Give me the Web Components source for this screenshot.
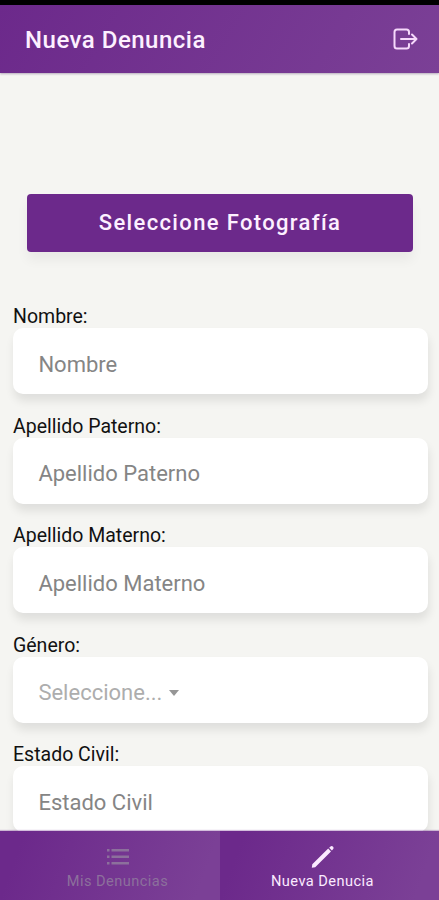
<!DOCTYPE html>
<html lang="es">
<head>
  <meta charset="UTF-8" />
  <meta name="viewport" content="width=device-width, initial-scale=1.0" />
  <title>Nueva Denuncia</title>
  <style>
    body {
      margin: 0;
      background: #f5f5f2;
      font-family: Roboto, "Liberation Sans", sans-serif;
    }
  </style>
</head>
<body>
  <denuncia-app>
    <app-header slot="header">Nueva Denuncia</app-header>
    <photo-button>Seleccione Fotografía</photo-button>
    <form-field label="Nombre:">Nombre</form-field>
    <form-field label="Apellido Paterno:">Apellido Paterno</form-field>
    <form-field label="Apellido Materno:">Apellido Materno</form-field>
    <form-field label="Género:" select>Seleccione...</form-field>
    <form-field label="Estado Civil:">Estado Civil</form-field>
    <tab-bar slot="tabs">
      <tab-item icon="list">Mis Denuncias</tab-item>
      <tab-item icon="pencil" active>Nueva Denucia</tab-item>
    </tab-bar>
  </denuncia-app>

  <script>
    class DenunciaApp extends HTMLElement {
      constructor() {
        super();
        this.attachShadow({ mode: 'open' }).innerHTML = `
          <style>
            :host {
              display: flex;
              flex-direction: column;
              height: 900px;
              overflow: hidden;
            }
            .status { flex: none; height: 5px; background: #000; }
            main { flex: 1; min-height: 0; overflow: hidden; padding: 121px 11px 0 13px; }
          </style>
          <div class="status"></div>
          <slot name="header"></slot>
          <main><slot></slot></main>
          <slot name="tabs"></slot>
        `;
      }
    }
    customElements.define('denuncia-app', DenunciaApp);

    class AppHeader extends HTMLElement {
      constructor() {
        super();
        this.attachShadow({ mode: 'open' }).innerHTML = `
          <style>
            :host {
              display: flex;
              flex: none;
              align-items: center;
              justify-content: space-between;
              box-sizing: border-box;
              height: 68px;
              padding: 2px 20px 0 25px;
              background: linear-gradient(120deg, #6c298b, #7b4096);
              box-shadow: 0 1px 2px rgba(60, 30, 80, 0.35);
              color: #fdf0ff;
              font-size: 24px;
              font-weight: 500;
              letter-spacing: 0.5px;
            }
            svg { display: block; margin-bottom: 2px; }
          </style>
          <slot></slot>
          <svg width="27" height="24" viewBox="0 0 27 24" fill="none" stroke="#f6d9fb" stroke-width="2" stroke-linecap="round" stroke-linejoin="round">
            <path d="M17 7V5Q17 2.500 14.500 2.500H5Q2.500 2.500 2.500 5V19Q2.500 21.500 5 21.500H14.500Q17 21.500 17 19V17" />
            <path d="M9 12H24.500M20 7.500L24.500 12L20 16.500" />
          </svg>
        `;
      }
    }
    customElements.define('app-header', AppHeader);

    class PhotoButton extends HTMLElement {
      constructor() {
        super();
        this.attachShadow({ mode: 'open' }).innerHTML = `
          <style>
            :host { display: block; padding: 0 15px 0 14px; margin-bottom: 52px; }
            button {
              display: block;
              width: 100%;
              height: 58px;
              padding: 0 0 2px;
              border: 0;
              border-radius: 4px;
              background: #6c298b;
              box-shadow: 0 8px 12px rgba(0, 0, 0, 0.05);
              color: #fdf0ff;
              font: 500 22px Roboto, "Liberation Sans", sans-serif;
              letter-spacing: 1.35px;
            }
          </style>
          <button type="button"><slot></slot></button>
        `;
      }
    }
    customElements.define('photo-button', PhotoButton);

    class FormField extends HTMLElement {
      constructor() {
        super();
        this.attachShadow({ mode: 'open' }).innerHTML = `
          <style>
            :host { display: block; height: 109.5px; }
            .label { height: 24px; font-size: 19.5px; line-height: 26px; color: #111; }
            .box {
              display: flex;
              align-items: center;
              gap: 7px;
              box-sizing: border-box;
              height: 66px;
              padding: 6px 25.4px 0;
              border-radius: 10px;
              background: #fff;
              box-shadow: 1px 7px 10px rgba(0, 0, 0, 0.09);
              color: #858585;
              font-size: 22px;
            }
            .arrow {
              display: none;
              border: 5.5px solid transparent;
              border-top: 6px solid #969696;
              border-bottom: 0;
            }
            :host([select]) .box { color: #adadad; }
            :host([select]) .arrow { display: block; }
          </style>
          <div class="label"></div>
          <div class="box"><span><slot></slot></span><i class="arrow"></i></div>
        `;
      }
      connectedCallback() {
        this.shadowRoot.querySelector('.label').textContent = this.getAttribute('label');
      }
    }
    customElements.define('form-field', FormField);

    class TabBar extends HTMLElement {
      constructor() {
        super();
        this.attachShadow({ mode: 'open' }).innerHTML = `
          <style>
            :host {
              display: grid;
              flex: none;
              grid-template-columns: 220px 1fr;
              height: 69px;
              box-shadow: 0 -1px 1px rgba(108, 41, 139, 0.3);
            }
          </style>
          <slot></slot>
        `;
      }
    }
    customElements.define('tab-bar', TabBar);

    const icons = {
      list: `<g fill="currentColor">
        <path d="M1 4H3.500V6.500H1ZM1 10.500H3.500V13H1ZM1 17H3.500V19.500H1Z" />
        <path d="M5.500 4H23V6.500H5.500ZM5.500 10.500H23V13H5.500ZM5.500 17H23V19.500H5.500Z" />
      </g>`,
      pencil: `<path d="M0.800 22.700L1.300 19.300L17.200 3.600L20 6.400L4.200 22.200ZM18.200 2.700L19.500 1.400Q20.800 0.500 22.100 1.700Q23.200 2.900 22.200 4.100L20.900 5.400Z" fill="currentColor" />`
    };

    class TabItem extends HTMLElement {
      constructor() {
        super();
        this.attachShadow({ mode: 'open' }).innerHTML = `
          <style>
            :host {
              display: flex;
              flex-direction: column;
              align-items: center;
              box-sizing: border-box;
              padding: 14px 0 0 15px;
              background: linear-gradient(110deg, #6c298b 10%, #7b4096 90%);
              color: #8c709c;
              font-size: 14.6px;
              line-height: 18px;
              letter-spacing: 0.45px;
            }
            :host([active]) { padding: 14px 14px 0 0; color: #fbeaff; }
            svg { display: block; margin-bottom: 3px; }
          </style>
          <svg width="24" height="24" viewBox="0 0 24 24"></svg>
          <slot></slot>
        `;
      }
      connectedCallback() {
        this.shadowRoot.querySelector('svg').innerHTML = icons[this.getAttribute('icon')];
      }
    }
    customElements.define('tab-item', TabItem);
  </script>
</body>
</html>
